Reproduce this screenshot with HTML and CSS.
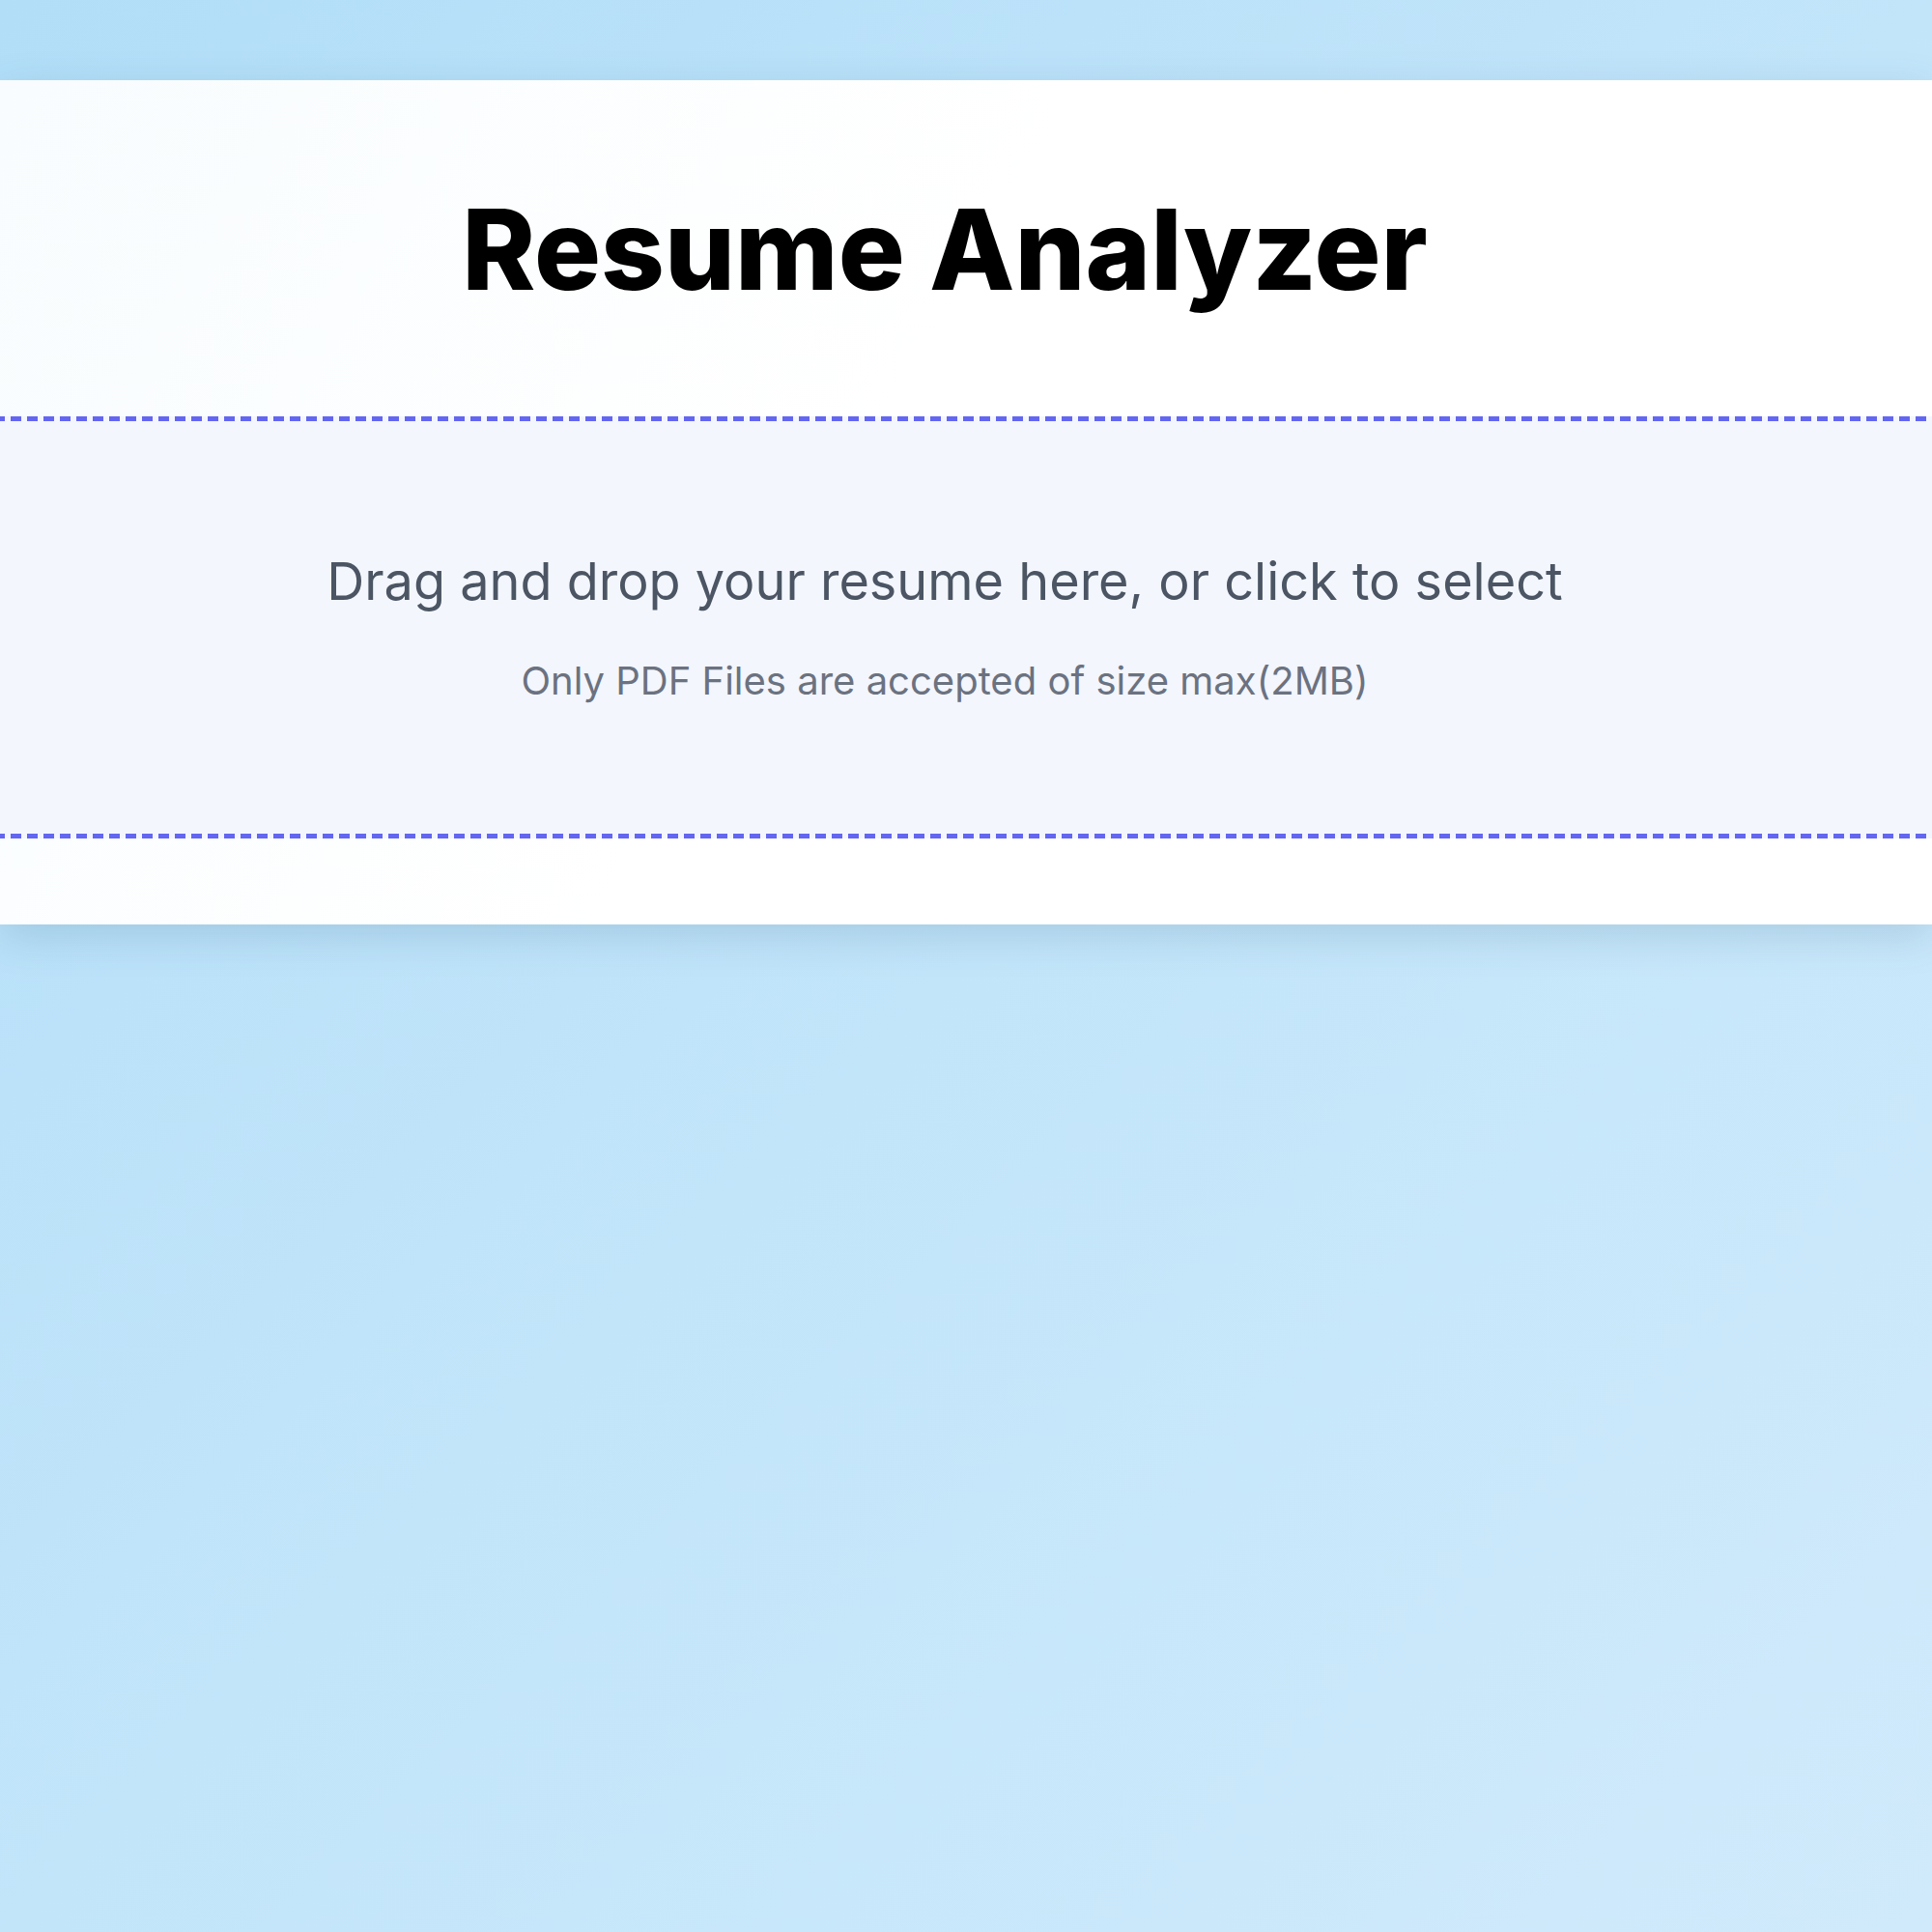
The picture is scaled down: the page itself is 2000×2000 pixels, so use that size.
FILE: index.html
```html
<!DOCTYPE html>
<html lang="en">
<head>
<meta charset="utf-8">
<title>Resume Analyzer</title>
<link rel="stylesheet" href="styles.css">
</head>
<body>
<main class="page">
  <section class="card">
    <h1 class="title">Resume Analyzer</h1>
    <div class="dropzone">
      <p class="drop-main">Drag and drop your resume here, or click to select</p>
      <p class="drop-sub">Only PDF Files are accepted of size max(2MB)</p>
    </div>
  </section>
</main>
</body>
</html>
```

FILE: styles.css
```css
html, body {
  margin: 0;
  padding: 0;
}

body {
  min-height: 2000px;
  background: linear-gradient(135deg, #b2def8 0%, #c2e5fa 50%, #d0eafb 100%);
  font-family: "Inter", "Noto Sans", sans-serif;
}

.page {
  padding-top: 83px;
}

.card {
  background: linear-gradient(120deg, #f8fcfe 0%, #ffffff 45%, #ffffff 100%);
  box-shadow: 0 12px 40px rgba(40, 90, 130, 0.18);
  padding: 0 0 89px 0;
}

.title {
  margin: 0;
  height: 348px;
  box-sizing: border-box;
  padding: 118px 44px 0 0;
  text-align: center;
  font-family: "Inter", "Noto Sans", sans-serif;
  font-weight: 800;
  font-size: 115px;
  line-height: 1;
  color: #000;
}

.dropzone {
  --dash: repeating-linear-gradient(to right, #6366f1 0 11px, transparent 11px 17px);
  height: 437px;
  box-sizing: border-box;
  background-color: #f3f6fd;
  background-image: var(--dash), var(--dash);
  background-size: 100% 5px, 100% 5px;
  background-position: -6px top, -6px bottom;
  background-repeat: no-repeat;
  display: flex;
  flex-direction: column;
  align-items: center;
  justify-content: center;
  padding: 0 44px 0 0;
  gap: 46px;
}

.drop-main {
  margin: 0;
  font-size: 54px;
  line-height: 1.2;
  color: #4b5563;
}

.drop-sub {
  margin: 0;
  font-size: 40px;
  line-height: 1.2;
  color: #6b7280;
}
```
